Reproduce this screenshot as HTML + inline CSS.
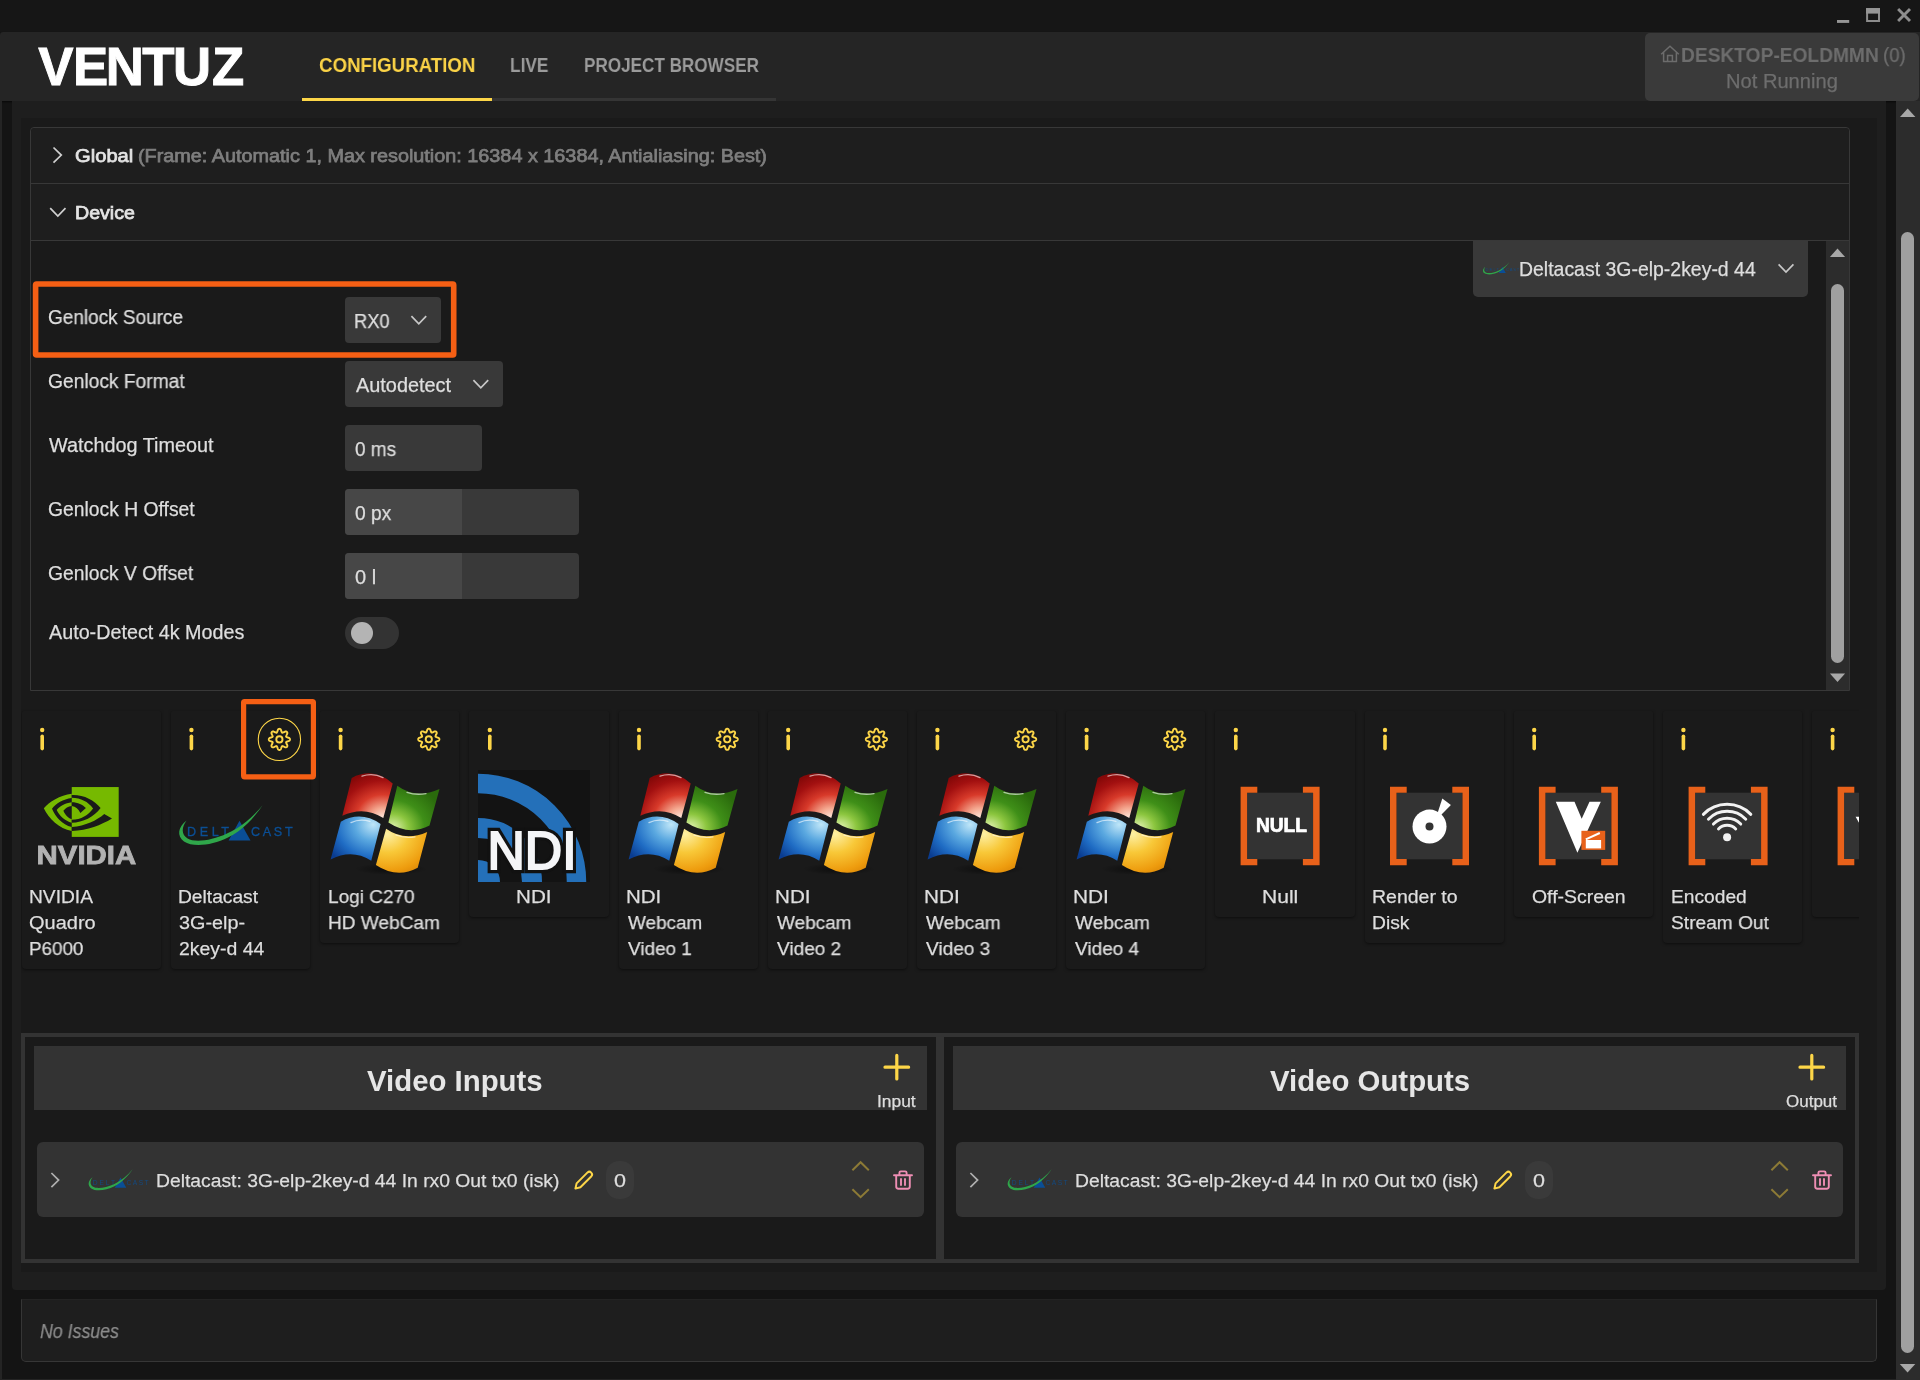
<!DOCTYPE html>
<html lang="en"><head><meta charset="utf-8"><title>Ventuz Configuration</title>
<style>
html,body{margin:0;padding:0;background:#141414;}
body{width:1920px;height:1380px;position:relative;overflow:hidden;font-family:"Liberation Sans",sans-serif;}
.b{position:absolute;box-sizing:border-box;}
.t{position:absolute;white-space:nowrap;line-height:1;transform-origin:0 0;display:block;will-change:transform;}
svg{position:absolute;overflow:visible;}
svg.g{will-change:transform;}
.card{position:absolute;background:#1a1a1a;box-shadow:0 1px 3px rgba(0,0,0,.5);border-radius:2px 2px 4px 4px;}
</style></head><body>

<div class="b" style="left:0px;top:0px;width:1920px;height:32px;background:#161616;"></div>
<div class="b" style="left:0px;top:32px;width:1920px;height:69px;background:#252525;border-radius:3px 0 0 0;box-shadow:0 1px 2px rgba(0,0,0,.6);"></div>
<div class="b" style="left:0px;top:101px;width:2px;height:1279px;background:#242424;"></div>
<div class="b" style="left:0px;top:1379px;width:1920px;height:1px;background:#242424;"></div>
<div class="b" style="left:12px;top:101px;width:1874px;height:1189px;background:#1e1e1e;border-radius:0 0 4px 4px;"></div>
<div class="b" style="left:21px;top:118px;width:1856px;height:1154px;background:#1a1a1a;"></div>
<div class="b" style="left:1896px;top:101px;width:24px;height:1279px;background:#2c2c2c;"></div>
<div class="b" style="left:1901px;top:232px;width:13px;height:1121px;background:#a0a0a0;border-radius:7px;"></div>
<svg style="left:1896px;top:101px" width="24" height="1279"><path d="M4 16 L19.4 16 L11.7 7.6 Z" fill="#a8a8a8"/><path d="M3.8 1263 L19.3 1263 L11.55 1271.4 Z" fill="#a8a8a8"/></svg>
<svg style="left:1830px;top:0" width="90" height="32"><rect x="7" y="20" width="12.2" height="2.9" fill="#969696"/><rect x="37.1" y="9.1" width="11.9" height="11.9" fill="none" stroke="#8c8c8c" stroke-width="2"/><rect x="36.1" y="8.1" width="13.9" height="5.5" fill="#959595"/><path d="M68.1 9.1 L80 21.1 M80 9.1 L68.1 21.1" stroke="#8e8e8e" stroke-width="2.9" fill="none"/></svg>
<svg class="g" style="left:0;top:32px" width="300" height="69"><text transform="scale(1.0 1)" x="38.32 73.07 105.87 142.31 172.98 212.01" y="53.2" font-family="Liberation Sans, sans-serif" font-weight="700" font-size="52.8" fill="#fff" stroke="#fff" stroke-width="0.9" stroke-linejoin="miter">VENTUZ</text></svg>
<div class="b" style="left:302px;top:98px;width:474px;height:3px;background:#353535;"></div>
<div class="b" style="left:302px;top:98px;width:190px;height:3px;background:#fdd648;"></div>
<span class="t" style="left:319px;top:55px;font-size:20.3px;color:#fbd347;transform:scaleX(0.9214);font-weight:700;">CONFIGURATION</span>
<span class="t" style="left:510px;top:55px;font-size:20.3px;color:#9b9b9b;transform:scaleX(0.8521);font-weight:700;">LIVE</span>
<span class="t" style="left:584px;top:55px;font-size:20.3px;color:#9b9b9b;transform:scaleX(0.8434);font-weight:700;">PROJECT BROWSER</span>
<div class="b" style="left:1645px;top:33px;width:274px;height:68px;background:#3a3a3a;border-radius:5px;"></div>
<svg style="left:1660px;top:45px" width="20" height="18"><path d="M1.2 9.2 L10 1.2 L18.8 9.2 M3.6 7.5 V16.6 H16.4 V7.5 M7.6 16.6 V10.6 H12.4 V16.6" fill="none" stroke="#6c6c6c" stroke-width="1.5"/></svg>
<span class="t" style="left:1681px;top:46px;font-size:19.4px;color:#6d6d6d;transform:scaleX(0.9890);font-weight:700;">DESKTOP-EOLDMMN</span>
<span class="t" style="left:1883px;top:46px;font-size:19.4px;color:#6d6d6d;transform:scaleX(0.9588);-webkit-text-stroke:0.25px #6d6d6d;">(0)</span>
<span class="t" style="left:1726px;top:72px;font-size:19.8px;color:#6d6d6d;transform:scaleX(1.0168);-webkit-text-stroke:0.25px #6d6d6d;">Not Running</span>
<div class="b" style="left:30px;top:127px;width:1820px;height:564px;background:#1a1a1a;border:1px solid #383838;border-radius:4px 4px 0 0;"></div>
<div class="b" style="left:31px;top:128px;width:1818px;height:55px;background:#1e1e1e;border-radius:4px 4px 0 0;"></div>
<div class="b" style="left:31px;top:183px;width:1818px;height:1px;background:#383838;"></div>
<div class="b" style="left:31px;top:184px;width:1818px;height:56px;background:#1e1e1e;"></div>
<div class="b" style="left:31px;top:240px;width:1818px;height:1px;background:#383838;"></div>
<svg style="left:48px;top:140px" width="24" height="90"><path d="M5.5 7.5 L13.3 15.1 L5.5 22.7" fill="none" stroke="#d0d0d0" stroke-width="1.7"/><path d="M2.2 68.1 L9.85 76 L17.5 68.1" fill="none" stroke="#d0d0d0" stroke-width="1.7"/></svg>
<span class="t" style="left:75px;top:146px;font-size:19.2px;color:#e4e4e4;transform:scaleX(1.0510);-webkit-text-stroke:0.75px #e4e4e4;">Global</span>
<span class="t" style="left:138px;top:146px;font-size:19.2px;color:#7e7e7e;transform:scaleX(1.0328);-webkit-text-stroke:0.75px #7e7e7e;">(Frame: Automatic 1, Max resolution: 16384 x 16384, Antialiasing: Best)</span>
<span class="t" style="left:75px;top:203px;font-size:19.2px;color:#e4e4e4;transform:scaleX(1.0216);-webkit-text-stroke:0.75px #e4e4e4;">Device</span>
<div class="b" style="left:1826px;top:241px;width:23px;height:449px;background:#2c2c2c;"></div>
<div class="b" style="left:1831px;top:284px;width:13px;height:379px;background:#a0a0a0;border-radius:7px;"></div>
<svg style="left:1826px;top:241px" width="23" height="449"><path d="M3.9 16 L19.1 16 L11.5 7.6 Z" fill="#a8a8a8"/><path d="M3.9 432.6 L19.1 432.6 L11.5 441 Z" fill="#a8a8a8"/></svg>
<div class="b" style="left:1473px;top:241px;width:335px;height:56px;background:#393939;border-radius:0 0 5px 5px;"></div>
<svg class="g" style="left:1481.6px;top:261.2px" width="38.4" height="14.7"><g transform="scale(0.32)"><path d="M52.6 37.6 L63.5 17.8 L74.5 37.6 Z" fill="#0a4e96"/><text x="11" y="32.6" font-family="Liberation Sans, sans-serif" font-size="12.6" fill="#0b4f95" stroke="#0b4f95" stroke-width="0" opacity="0.8" textLength="42" lengthAdjust="spacing">DELT</text><text x="75" y="32.6" font-family="Liberation Sans, sans-serif" font-size="12.6" fill="#0b4f95" stroke="#0b4f95" stroke-width="0" opacity="0.8" textLength="41.6" lengthAdjust="spacing">CAST</text><path d="M10.6 17.6 C2 24 0.5 33 8 38.6 C17 44.6 36 42.6 52 34.6 C66 27.6 78 15 86.4 2.4 C77 14 65 24 51 30.6 C36 37.6 19 40 11.6 35.6 C5 31.6 5.6 24 10.6 17.6 Z" fill="#2fa64a"/></g></svg>
<span class="t" style="left:1519px;top:260px;font-size:19.3px;color:#dedede;transform:scaleX(1.0086);-webkit-text-stroke:0.25px #dedede;">Deltacast 3G-elp-2key-d 44</span>
<svg style="left:1776px;top:260px" width="20" height="16"><path d="M2.6 4.4 L10 12 L17.4 4.4" fill="none" stroke="#c8c8c8" stroke-width="1.7"/></svg>
<span class="t" style="left:48px;top:308px;font-size:19.3px;color:#dedede;transform:scaleX(0.9840);-webkit-text-stroke:0.25px #dedede;">Genlock Source</span>
<span class="t" style="left:48px;top:372px;font-size:19.3px;color:#dedede;transform:scaleX(0.9969);-webkit-text-stroke:0.25px #dedede;">Genlock Format</span>
<span class="t" style="left:49px;top:436px;font-size:19.3px;color:#dedede;transform:scaleX(1.0285);-webkit-text-stroke:0.25px #dedede;">Watchdog Timeout</span>
<span class="t" style="left:48px;top:500px;font-size:19.3px;color:#dedede;transform:scaleX(1.0013);-webkit-text-stroke:0.25px #dedede;">Genlock H Offset</span>
<span class="t" style="left:48px;top:564px;font-size:19.3px;color:#dedede;transform:scaleX(0.9988);-webkit-text-stroke:0.25px #dedede;">Genlock V Offset</span>
<span class="t" style="left:49px;top:623px;font-size:19.3px;color:#dedede;transform:scaleX(1.0238);-webkit-text-stroke:0.25px #dedede;">Auto-Detect 4k Modes</span>
<div class="b" style="left:345px;top:297px;width:96px;height:46px;background:#393939;border-radius:4px;"></div>
<span class="t" style="left:354px;top:312px;font-size:19.3px;color:#dedede;transform:scaleX(0.9499);-webkit-text-stroke:0.25px #dedede;">RX0</span>
<svg style="left:409px;top:312px" width="20" height="16"><path d="M2.4 4.2 L9.8 11.8 L17.2 4.2" fill="none" stroke="#c8c8c8" stroke-width="1.7"/></svg>
<div class="b" style="left:345px;top:361px;width:158px;height:46px;background:#393939;border-radius:4px;"></div>
<span class="t" style="left:356px;top:376px;font-size:19.3px;color:#dedede;transform:scaleX(1.0313);-webkit-text-stroke:0.25px #dedede;">Autodetect</span>
<svg style="left:471px;top:376px" width="20" height="16"><path d="M2.4 4.2 L9.8 11.8 L17.2 4.2" fill="none" stroke="#c8c8c8" stroke-width="1.7"/></svg>
<div class="b" style="left:345px;top:425px;width:137px;height:46px;background:#393939;border-radius:4px;"></div>
<span class="t" style="left:355px;top:440px;font-size:19.3px;color:#dedede;transform:scaleX(0.9823);-webkit-text-stroke:0.25px #dedede;">0 ms</span>
<div class="b" style="left:345px;top:489px;width:234px;height:46px;background:#393939;border-radius:4px;"></div>
<div class="b" style="left:345px;top:489px;width:117px;height:46px;background:#474747;border-radius:4px 0 0 4px;"></div>
<span class="t" style="left:355px;top:504px;font-size:19.3px;color:#dedede;transform:scaleX(0.9960);-webkit-text-stroke:0.25px #dedede;">0 px</span>
<div class="b" style="left:345px;top:553px;width:234px;height:46px;background:#393939;border-radius:4px;"></div>
<div class="b" style="left:345px;top:553px;width:117px;height:46px;background:#474747;border-radius:4px 0 0 4px;"></div>
<span class="t" style="left:355px;top:568px;font-size:19.3px;color:#dedede;transform:scaleX(1.0394);-webkit-text-stroke:0.25px #dedede;">0 l</span>
<div class="b" style="left:345px;top:617px;width:54px;height:32px;background:#333333;border-radius:16px;"></div>
<div class="b" style="left:351px;top:622px;width:22px;height:22px;background:#b4b4b4;border-radius:11px;"></div>
<svg style="left:0;top:0" width="1" height="1"><rect x="35.6" y="284" width="418.1" height="71" rx="1" fill="none" stroke="#f55f14" stroke-width="5.6" stroke-linejoin="round"/></svg>
<div class="b" style="left:21px;top:700px;width:1838px;height:320px;overflow:hidden;">
<div style="position:absolute;left:-21px;top:-700px;">
<div class="card" style="left:21.7px;top:710.5px;width:139.3px;height:258px;"></div>
<svg style="left:0;top:0" width="1" height="1"><circle cx="42.2" cy="730" r="2.2" fill="#fdd648"/><path d="M42.2 736.3 V748.6" stroke="#fdd648" stroke-width="3.6" stroke-linecap="round"/></svg>
<div class="card" style="left:170.9px;top:710.5px;width:139.3px;height:258px;"></div>
<svg style="left:0;top:0" width="1" height="1"><circle cx="191.4" cy="730" r="2.2" fill="#fdd648"/><path d="M191.4 736.3 V748.6" stroke="#fdd648" stroke-width="3.6" stroke-linecap="round"/></svg>
<div class="card" style="left:320.1px;top:710.5px;width:139.3px;height:232px;"></div>
<svg style="left:0;top:0" width="1" height="1"><circle cx="340.6" cy="730" r="2.2" fill="#fdd648"/><path d="M340.6 736.3 V748.6" stroke="#fdd648" stroke-width="3.6" stroke-linecap="round"/></svg>
<div class="card" style="left:469.3px;top:710.5px;width:139.3px;height:206px;"></div>
<svg style="left:0;top:0" width="1" height="1"><circle cx="489.8" cy="730" r="2.2" fill="#fdd648"/><path d="M489.8 736.3 V748.6" stroke="#fdd648" stroke-width="3.6" stroke-linecap="round"/></svg>
<div class="card" style="left:618.5px;top:710.5px;width:139.3px;height:258px;"></div>
<svg style="left:0;top:0" width="1" height="1"><circle cx="639.0" cy="730" r="2.2" fill="#fdd648"/><path d="M639.0 736.3 V748.6" stroke="#fdd648" stroke-width="3.6" stroke-linecap="round"/></svg>
<div class="card" style="left:767.7px;top:710.5px;width:139.3px;height:258px;"></div>
<svg style="left:0;top:0" width="1" height="1"><circle cx="788.2" cy="730" r="2.2" fill="#fdd648"/><path d="M788.2 736.3 V748.6" stroke="#fdd648" stroke-width="3.6" stroke-linecap="round"/></svg>
<div class="card" style="left:916.9px;top:710.5px;width:139.3px;height:258px;"></div>
<svg style="left:0;top:0" width="1" height="1"><circle cx="937.4" cy="730" r="2.2" fill="#fdd648"/><path d="M937.4 736.3 V748.6" stroke="#fdd648" stroke-width="3.6" stroke-linecap="round"/></svg>
<div class="card" style="left:1066.1px;top:710.5px;width:139.3px;height:258px;"></div>
<svg style="left:0;top:0" width="1" height="1"><circle cx="1086.6" cy="730" r="2.2" fill="#fdd648"/><path d="M1086.6 736.3 V748.6" stroke="#fdd648" stroke-width="3.6" stroke-linecap="round"/></svg>
<div class="card" style="left:1215.3px;top:710.5px;width:139.3px;height:206px;"></div>
<svg style="left:0;top:0" width="1" height="1"><circle cx="1235.8" cy="730" r="2.2" fill="#fdd648"/><path d="M1235.8 736.3 V748.6" stroke="#fdd648" stroke-width="3.6" stroke-linecap="round"/></svg>
<div class="card" style="left:1364.5px;top:710.5px;width:139.3px;height:232px;"></div>
<svg style="left:0;top:0" width="1" height="1"><circle cx="1385.0" cy="730" r="2.2" fill="#fdd648"/><path d="M1385.0 736.3 V748.6" stroke="#fdd648" stroke-width="3.6" stroke-linecap="round"/></svg>
<div class="card" style="left:1513.7px;top:710.5px;width:139.3px;height:206px;"></div>
<svg style="left:0;top:0" width="1" height="1"><circle cx="1534.2" cy="730" r="2.2" fill="#fdd648"/><path d="M1534.2 736.3 V748.6" stroke="#fdd648" stroke-width="3.6" stroke-linecap="round"/></svg>
<div class="card" style="left:1662.9px;top:710.5px;width:139.3px;height:232px;"></div>
<svg style="left:0;top:0" width="1" height="1"><circle cx="1683.4" cy="730" r="2.2" fill="#fdd648"/><path d="M1683.4 736.3 V748.6" stroke="#fdd648" stroke-width="3.6" stroke-linecap="round"/></svg>
<div class="card" style="left:1812.1px;top:710.5px;width:139.3px;height:206px;"></div>
<svg style="left:0;top:0" width="1" height="1"><circle cx="1832.6" cy="730" r="2.2" fill="#fdd648"/><path d="M1832.6 736.3 V748.6" stroke="#fdd648" stroke-width="3.6" stroke-linecap="round"/></svg>
<svg style="left:0;top:0" width="1" height="1"><path d="M428.80 728.70 L429.08 728.73 L429.35 728.80 L429.62 728.94 L429.87 729.12 L430.11 729.37 L430.32 729.70 L430.49 730.17 L430.60 730.82 L430.77 731.11 L430.91 731.44 L431.03 731.76 L431.15 732.06 L431.28 732.31 L431.41 732.49 L431.57 732.60 L431.77 732.64 L431.99 732.61 L432.26 732.52 L432.55 732.39 L432.87 732.25 L433.20 732.12 L433.52 732.03 L434.06 731.65 L434.51 731.44 L434.90 731.36 L435.24 731.35 L435.55 731.39 L435.83 731.49 L436.08 731.63 L436.30 731.80 L436.47 732.02 L436.61 732.27 L436.71 732.55 L436.75 732.86 L436.74 733.20 L436.66 733.59 L436.45 734.04 L436.07 734.58 L435.98 734.90 L435.85 735.23 L435.71 735.55 L435.58 735.84 L435.49 736.11 L435.46 736.33 L435.50 736.53 L435.61 736.69 L435.79 736.82 L436.04 736.95 L436.34 737.07 L436.66 737.19 L436.99 737.33 L437.28 737.50 L437.93 737.61 L438.40 737.78 L438.73 737.99 L438.98 738.23 L439.16 738.48 L439.30 738.75 L439.37 739.02 L439.40 739.30 L439.37 739.58 L439.30 739.85 L439.16 740.12 L438.98 740.37 L438.73 740.61 L438.40 740.82 L437.93 740.99 L437.28 741.10 L436.99 741.27 L436.66 741.41 L436.34 741.53 L436.04 741.65 L435.79 741.78 L435.61 741.91 L435.50 742.07 L435.46 742.27 L435.49 742.49 L435.58 742.76 L435.71 743.05 L435.85 743.37 L435.98 743.70 L436.07 744.02 L436.45 744.56 L436.66 745.01 L436.74 745.40 L436.75 745.74 L436.71 746.05 L436.61 746.33 L436.47 746.58 L436.30 746.80 L436.08 746.97 L435.83 747.11 L435.55 747.21 L435.24 747.25 L434.90 747.24 L434.51 747.16 L434.06 746.95 L433.52 746.57 L433.20 746.48 L432.87 746.35 L432.55 746.21 L432.26 746.08 L431.99 745.99 L431.77 745.96 L431.57 746.00 L431.41 746.11 L431.28 746.29 L431.15 746.54 L431.03 746.84 L430.91 747.16 L430.77 747.49 L430.60 747.78 L430.49 748.43 L430.32 748.90 L430.11 749.23 L429.87 749.48 L429.62 749.66 L429.35 749.80 L429.08 749.87 L428.80 749.90 L428.52 749.87 L428.25 749.80 L427.98 749.66 L427.73 749.48 L427.49 749.23 L427.28 748.90 L427.11 748.43 L427.00 747.78 L426.83 747.49 L426.69 747.16 L426.57 746.84 L426.45 746.54 L426.32 746.29 L426.19 746.11 L426.03 746.00 L425.83 745.96 L425.61 745.99 L425.34 746.08 L425.05 746.21 L424.73 746.35 L424.40 746.48 L424.08 746.57 L423.54 746.95 L423.09 747.16 L422.70 747.24 L422.36 747.25 L422.05 747.21 L421.77 747.11 L421.52 746.97 L421.30 746.80 L421.13 746.58 L420.99 746.33 L420.89 746.05 L420.85 745.74 L420.86 745.40 L420.94 745.01 L421.15 744.56 L421.53 744.02 L421.62 743.70 L421.75 743.37 L421.89 743.05 L422.02 742.76 L422.11 742.49 L422.14 742.27 L422.10 742.07 L421.99 741.91 L421.81 741.78 L421.56 741.65 L421.26 741.53 L420.94 741.41 L420.61 741.27 L420.32 741.10 L419.67 740.99 L419.20 740.82 L418.87 740.61 L418.62 740.37 L418.44 740.12 L418.30 739.85 L418.23 739.58 L418.20 739.30 L418.23 739.02 L418.30 738.75 L418.44 738.48 L418.62 738.23 L418.87 737.99 L419.20 737.78 L419.67 737.61 L420.32 737.50 L420.61 737.33 L420.94 737.19 L421.26 737.07 L421.56 736.95 L421.81 736.82 L421.99 736.69 L422.10 736.53 L422.14 736.33 L422.11 736.11 L422.02 735.84 L421.89 735.55 L421.75 735.23 L421.62 734.90 L421.53 734.58 L421.15 734.04 L420.94 733.59 L420.86 733.20 L420.85 732.86 L420.89 732.55 L420.99 732.27 L421.13 732.02 L421.30 731.80 L421.52 731.63 L421.77 731.49 L422.05 731.39 L422.36 731.35 L422.70 731.36 L423.09 731.44 L423.54 731.65 L424.08 732.03 L424.40 732.12 L424.73 732.25 L425.05 732.39 L425.34 732.52 L425.61 732.61 L425.83 732.64 L426.03 732.60 L426.19 732.49 L426.32 732.31 L426.45 732.06 L426.57 731.76 L426.69 731.44 L426.83 731.11 L427.00 730.82 L427.11 730.17 L427.28 729.70 L427.49 729.37 L427.73 729.12 L427.98 728.94 L428.25 728.80 L428.52 728.73 Z" fill="none" stroke="#fdd648" stroke-width="1.9" stroke-linejoin="round"/><circle cx="428.8" cy="739.3" r="3.1" fill="none" stroke="#fdd648" stroke-width="1.9"/></svg>
<svg style="left:0;top:0" width="1" height="1"><path d="M727.20 728.70 L727.48 728.73 L727.75 728.80 L728.02 728.94 L728.27 729.12 L728.51 729.37 L728.72 729.70 L728.89 730.17 L729.00 730.82 L729.17 731.11 L729.31 731.44 L729.43 731.76 L729.55 732.06 L729.68 732.31 L729.81 732.49 L729.97 732.60 L730.17 732.64 L730.39 732.61 L730.66 732.52 L730.95 732.39 L731.27 732.25 L731.60 732.12 L731.92 732.03 L732.46 731.65 L732.91 731.44 L733.30 731.36 L733.64 731.35 L733.95 731.39 L734.23 731.49 L734.48 731.63 L734.70 731.80 L734.87 732.02 L735.01 732.27 L735.11 732.55 L735.15 732.86 L735.14 733.20 L735.06 733.59 L734.85 734.04 L734.47 734.58 L734.38 734.90 L734.25 735.23 L734.11 735.55 L733.98 735.84 L733.89 736.11 L733.86 736.33 L733.90 736.53 L734.01 736.69 L734.19 736.82 L734.44 736.95 L734.74 737.07 L735.06 737.19 L735.39 737.33 L735.68 737.50 L736.33 737.61 L736.80 737.78 L737.13 737.99 L737.38 738.23 L737.56 738.48 L737.70 738.75 L737.77 739.02 L737.80 739.30 L737.77 739.58 L737.70 739.85 L737.56 740.12 L737.38 740.37 L737.13 740.61 L736.80 740.82 L736.33 740.99 L735.68 741.10 L735.39 741.27 L735.06 741.41 L734.74 741.53 L734.44 741.65 L734.19 741.78 L734.01 741.91 L733.90 742.07 L733.86 742.27 L733.89 742.49 L733.98 742.76 L734.11 743.05 L734.25 743.37 L734.38 743.70 L734.47 744.02 L734.85 744.56 L735.06 745.01 L735.14 745.40 L735.15 745.74 L735.11 746.05 L735.01 746.33 L734.87 746.58 L734.70 746.80 L734.48 746.97 L734.23 747.11 L733.95 747.21 L733.64 747.25 L733.30 747.24 L732.91 747.16 L732.46 746.95 L731.92 746.57 L731.60 746.48 L731.27 746.35 L730.95 746.21 L730.66 746.08 L730.39 745.99 L730.17 745.96 L729.97 746.00 L729.81 746.11 L729.68 746.29 L729.55 746.54 L729.43 746.84 L729.31 747.16 L729.17 747.49 L729.00 747.78 L728.89 748.43 L728.72 748.90 L728.51 749.23 L728.27 749.48 L728.02 749.66 L727.75 749.80 L727.48 749.87 L727.20 749.90 L726.92 749.87 L726.65 749.80 L726.38 749.66 L726.13 749.48 L725.89 749.23 L725.68 748.90 L725.51 748.43 L725.40 747.78 L725.23 747.49 L725.09 747.16 L724.97 746.84 L724.85 746.54 L724.72 746.29 L724.59 746.11 L724.43 746.00 L724.23 745.96 L724.01 745.99 L723.74 746.08 L723.45 746.21 L723.13 746.35 L722.80 746.48 L722.48 746.57 L721.94 746.95 L721.49 747.16 L721.10 747.24 L720.76 747.25 L720.45 747.21 L720.17 747.11 L719.92 746.97 L719.70 746.80 L719.53 746.58 L719.39 746.33 L719.29 746.05 L719.25 745.74 L719.26 745.40 L719.34 745.01 L719.55 744.56 L719.93 744.02 L720.02 743.70 L720.15 743.37 L720.29 743.05 L720.42 742.76 L720.51 742.49 L720.54 742.27 L720.50 742.07 L720.39 741.91 L720.21 741.78 L719.96 741.65 L719.66 741.53 L719.34 741.41 L719.01 741.27 L718.72 741.10 L718.07 740.99 L717.60 740.82 L717.27 740.61 L717.02 740.37 L716.84 740.12 L716.70 739.85 L716.63 739.58 L716.60 739.30 L716.63 739.02 L716.70 738.75 L716.84 738.48 L717.02 738.23 L717.27 737.99 L717.60 737.78 L718.07 737.61 L718.72 737.50 L719.01 737.33 L719.34 737.19 L719.66 737.07 L719.96 736.95 L720.21 736.82 L720.39 736.69 L720.50 736.53 L720.54 736.33 L720.51 736.11 L720.42 735.84 L720.29 735.55 L720.15 735.23 L720.02 734.90 L719.93 734.58 L719.55 734.04 L719.34 733.59 L719.26 733.20 L719.25 732.86 L719.29 732.55 L719.39 732.27 L719.53 732.02 L719.70 731.80 L719.92 731.63 L720.17 731.49 L720.45 731.39 L720.76 731.35 L721.10 731.36 L721.49 731.44 L721.94 731.65 L722.48 732.03 L722.80 732.12 L723.13 732.25 L723.45 732.39 L723.74 732.52 L724.01 732.61 L724.23 732.64 L724.43 732.60 L724.59 732.49 L724.72 732.31 L724.85 732.06 L724.97 731.76 L725.09 731.44 L725.23 731.11 L725.40 730.82 L725.51 730.17 L725.68 729.70 L725.89 729.37 L726.13 729.12 L726.38 728.94 L726.65 728.80 L726.92 728.73 Z" fill="none" stroke="#fdd648" stroke-width="1.9" stroke-linejoin="round"/><circle cx="727.2" cy="739.3" r="3.1" fill="none" stroke="#fdd648" stroke-width="1.9"/></svg>
<svg style="left:0;top:0" width="1" height="1"><path d="M876.40 728.70 L876.68 728.73 L876.95 728.80 L877.22 728.94 L877.47 729.12 L877.71 729.37 L877.92 729.70 L878.09 730.17 L878.20 730.82 L878.37 731.11 L878.51 731.44 L878.63 731.76 L878.75 732.06 L878.88 732.31 L879.01 732.49 L879.17 732.60 L879.37 732.64 L879.59 732.61 L879.86 732.52 L880.15 732.39 L880.47 732.25 L880.80 732.12 L881.12 732.03 L881.66 731.65 L882.11 731.44 L882.50 731.36 L882.84 731.35 L883.15 731.39 L883.43 731.49 L883.68 731.63 L883.90 731.80 L884.07 732.02 L884.21 732.27 L884.31 732.55 L884.35 732.86 L884.34 733.20 L884.26 733.59 L884.05 734.04 L883.67 734.58 L883.58 734.90 L883.45 735.23 L883.31 735.55 L883.18 735.84 L883.09 736.11 L883.06 736.33 L883.10 736.53 L883.21 736.69 L883.39 736.82 L883.64 736.95 L883.94 737.07 L884.26 737.19 L884.59 737.33 L884.88 737.50 L885.53 737.61 L886.00 737.78 L886.33 737.99 L886.58 738.23 L886.76 738.48 L886.90 738.75 L886.97 739.02 L887.00 739.30 L886.97 739.58 L886.90 739.85 L886.76 740.12 L886.58 740.37 L886.33 740.61 L886.00 740.82 L885.53 740.99 L884.88 741.10 L884.59 741.27 L884.26 741.41 L883.94 741.53 L883.64 741.65 L883.39 741.78 L883.21 741.91 L883.10 742.07 L883.06 742.27 L883.09 742.49 L883.18 742.76 L883.31 743.05 L883.45 743.37 L883.58 743.70 L883.67 744.02 L884.05 744.56 L884.26 745.01 L884.34 745.40 L884.35 745.74 L884.31 746.05 L884.21 746.33 L884.07 746.58 L883.90 746.80 L883.68 746.97 L883.43 747.11 L883.15 747.21 L882.84 747.25 L882.50 747.24 L882.11 747.16 L881.66 746.95 L881.12 746.57 L880.80 746.48 L880.47 746.35 L880.15 746.21 L879.86 746.08 L879.59 745.99 L879.37 745.96 L879.17 746.00 L879.01 746.11 L878.88 746.29 L878.75 746.54 L878.63 746.84 L878.51 747.16 L878.37 747.49 L878.20 747.78 L878.09 748.43 L877.92 748.90 L877.71 749.23 L877.47 749.48 L877.22 749.66 L876.95 749.80 L876.68 749.87 L876.40 749.90 L876.12 749.87 L875.85 749.80 L875.58 749.66 L875.33 749.48 L875.09 749.23 L874.88 748.90 L874.71 748.43 L874.60 747.78 L874.43 747.49 L874.29 747.16 L874.17 746.84 L874.05 746.54 L873.92 746.29 L873.79 746.11 L873.63 746.00 L873.43 745.96 L873.21 745.99 L872.94 746.08 L872.65 746.21 L872.33 746.35 L872.00 746.48 L871.68 746.57 L871.14 746.95 L870.69 747.16 L870.30 747.24 L869.96 747.25 L869.65 747.21 L869.37 747.11 L869.12 746.97 L868.90 746.80 L868.73 746.58 L868.59 746.33 L868.49 746.05 L868.45 745.74 L868.46 745.40 L868.54 745.01 L868.75 744.56 L869.13 744.02 L869.22 743.70 L869.35 743.37 L869.49 743.05 L869.62 742.76 L869.71 742.49 L869.74 742.27 L869.70 742.07 L869.59 741.91 L869.41 741.78 L869.16 741.65 L868.86 741.53 L868.54 741.41 L868.21 741.27 L867.92 741.10 L867.27 740.99 L866.80 740.82 L866.47 740.61 L866.22 740.37 L866.04 740.12 L865.90 739.85 L865.83 739.58 L865.80 739.30 L865.83 739.02 L865.90 738.75 L866.04 738.48 L866.22 738.23 L866.47 737.99 L866.80 737.78 L867.27 737.61 L867.92 737.50 L868.21 737.33 L868.54 737.19 L868.86 737.07 L869.16 736.95 L869.41 736.82 L869.59 736.69 L869.70 736.53 L869.74 736.33 L869.71 736.11 L869.62 735.84 L869.49 735.55 L869.35 735.23 L869.22 734.90 L869.13 734.58 L868.75 734.04 L868.54 733.59 L868.46 733.20 L868.45 732.86 L868.49 732.55 L868.59 732.27 L868.73 732.02 L868.90 731.80 L869.12 731.63 L869.37 731.49 L869.65 731.39 L869.96 731.35 L870.30 731.36 L870.69 731.44 L871.14 731.65 L871.68 732.03 L872.00 732.12 L872.33 732.25 L872.65 732.39 L872.94 732.52 L873.21 732.61 L873.43 732.64 L873.63 732.60 L873.79 732.49 L873.92 732.31 L874.05 732.06 L874.17 731.76 L874.29 731.44 L874.43 731.11 L874.60 730.82 L874.71 730.17 L874.88 729.70 L875.09 729.37 L875.33 729.12 L875.58 728.94 L875.85 728.80 L876.12 728.73 Z" fill="none" stroke="#fdd648" stroke-width="1.9" stroke-linejoin="round"/><circle cx="876.4" cy="739.3" r="3.1" fill="none" stroke="#fdd648" stroke-width="1.9"/></svg>
<svg style="left:0;top:0" width="1" height="1"><path d="M1025.60 728.70 L1025.88 728.73 L1026.15 728.80 L1026.42 728.94 L1026.67 729.12 L1026.91 729.37 L1027.12 729.70 L1027.29 730.17 L1027.40 730.82 L1027.57 731.11 L1027.71 731.44 L1027.83 731.76 L1027.95 732.06 L1028.08 732.31 L1028.21 732.49 L1028.37 732.60 L1028.57 732.64 L1028.79 732.61 L1029.06 732.52 L1029.35 732.39 L1029.67 732.25 L1030.00 732.12 L1030.32 732.03 L1030.86 731.65 L1031.31 731.44 L1031.70 731.36 L1032.04 731.35 L1032.35 731.39 L1032.63 731.49 L1032.88 731.63 L1033.10 731.80 L1033.27 732.02 L1033.41 732.27 L1033.51 732.55 L1033.55 732.86 L1033.54 733.20 L1033.46 733.59 L1033.25 734.04 L1032.87 734.58 L1032.78 734.90 L1032.65 735.23 L1032.51 735.55 L1032.38 735.84 L1032.29 736.11 L1032.26 736.33 L1032.30 736.53 L1032.41 736.69 L1032.59 736.82 L1032.84 736.95 L1033.14 737.07 L1033.46 737.19 L1033.79 737.33 L1034.08 737.50 L1034.73 737.61 L1035.20 737.78 L1035.53 737.99 L1035.78 738.23 L1035.96 738.48 L1036.10 738.75 L1036.17 739.02 L1036.20 739.30 L1036.17 739.58 L1036.10 739.85 L1035.96 740.12 L1035.78 740.37 L1035.53 740.61 L1035.20 740.82 L1034.73 740.99 L1034.08 741.10 L1033.79 741.27 L1033.46 741.41 L1033.14 741.53 L1032.84 741.65 L1032.59 741.78 L1032.41 741.91 L1032.30 742.07 L1032.26 742.27 L1032.29 742.49 L1032.38 742.76 L1032.51 743.05 L1032.65 743.37 L1032.78 743.70 L1032.87 744.02 L1033.25 744.56 L1033.46 745.01 L1033.54 745.40 L1033.55 745.74 L1033.51 746.05 L1033.41 746.33 L1033.27 746.58 L1033.10 746.80 L1032.88 746.97 L1032.63 747.11 L1032.35 747.21 L1032.04 747.25 L1031.70 747.24 L1031.31 747.16 L1030.86 746.95 L1030.32 746.57 L1030.00 746.48 L1029.67 746.35 L1029.35 746.21 L1029.06 746.08 L1028.79 745.99 L1028.57 745.96 L1028.37 746.00 L1028.21 746.11 L1028.08 746.29 L1027.95 746.54 L1027.83 746.84 L1027.71 747.16 L1027.57 747.49 L1027.40 747.78 L1027.29 748.43 L1027.12 748.90 L1026.91 749.23 L1026.67 749.48 L1026.42 749.66 L1026.15 749.80 L1025.88 749.87 L1025.60 749.90 L1025.32 749.87 L1025.05 749.80 L1024.78 749.66 L1024.53 749.48 L1024.29 749.23 L1024.08 748.90 L1023.91 748.43 L1023.80 747.78 L1023.63 747.49 L1023.49 747.16 L1023.37 746.84 L1023.25 746.54 L1023.12 746.29 L1022.99 746.11 L1022.83 746.00 L1022.63 745.96 L1022.41 745.99 L1022.14 746.08 L1021.85 746.21 L1021.53 746.35 L1021.20 746.48 L1020.88 746.57 L1020.34 746.95 L1019.89 747.16 L1019.50 747.24 L1019.16 747.25 L1018.85 747.21 L1018.57 747.11 L1018.32 746.97 L1018.10 746.80 L1017.93 746.58 L1017.79 746.33 L1017.69 746.05 L1017.65 745.74 L1017.66 745.40 L1017.74 745.01 L1017.95 744.56 L1018.33 744.02 L1018.42 743.70 L1018.55 743.37 L1018.69 743.05 L1018.82 742.76 L1018.91 742.49 L1018.94 742.27 L1018.90 742.07 L1018.79 741.91 L1018.61 741.78 L1018.36 741.65 L1018.06 741.53 L1017.74 741.41 L1017.41 741.27 L1017.12 741.10 L1016.47 740.99 L1016.00 740.82 L1015.67 740.61 L1015.42 740.37 L1015.24 740.12 L1015.10 739.85 L1015.03 739.58 L1015.00 739.30 L1015.03 739.02 L1015.10 738.75 L1015.24 738.48 L1015.42 738.23 L1015.67 737.99 L1016.00 737.78 L1016.47 737.61 L1017.12 737.50 L1017.41 737.33 L1017.74 737.19 L1018.06 737.07 L1018.36 736.95 L1018.61 736.82 L1018.79 736.69 L1018.90 736.53 L1018.94 736.33 L1018.91 736.11 L1018.82 735.84 L1018.69 735.55 L1018.55 735.23 L1018.42 734.90 L1018.33 734.58 L1017.95 734.04 L1017.74 733.59 L1017.66 733.20 L1017.65 732.86 L1017.69 732.55 L1017.79 732.27 L1017.93 732.02 L1018.10 731.80 L1018.32 731.63 L1018.57 731.49 L1018.85 731.39 L1019.16 731.35 L1019.50 731.36 L1019.89 731.44 L1020.34 731.65 L1020.88 732.03 L1021.20 732.12 L1021.53 732.25 L1021.85 732.39 L1022.14 732.52 L1022.41 732.61 L1022.63 732.64 L1022.83 732.60 L1022.99 732.49 L1023.12 732.31 L1023.25 732.06 L1023.37 731.76 L1023.49 731.44 L1023.63 731.11 L1023.80 730.82 L1023.91 730.17 L1024.08 729.70 L1024.29 729.37 L1024.53 729.12 L1024.78 728.94 L1025.05 728.80 L1025.32 728.73 Z" fill="none" stroke="#fdd648" stroke-width="1.9" stroke-linejoin="round"/><circle cx="1025.6" cy="739.3" r="3.1" fill="none" stroke="#fdd648" stroke-width="1.9"/></svg>
<svg style="left:0;top:0" width="1" height="1"><path d="M1174.80 728.70 L1175.08 728.73 L1175.35 728.80 L1175.62 728.94 L1175.87 729.12 L1176.11 729.37 L1176.32 729.70 L1176.49 730.17 L1176.60 730.82 L1176.77 731.11 L1176.91 731.44 L1177.03 731.76 L1177.15 732.06 L1177.28 732.31 L1177.41 732.49 L1177.57 732.60 L1177.77 732.64 L1177.99 732.61 L1178.26 732.52 L1178.55 732.39 L1178.87 732.25 L1179.20 732.12 L1179.52 732.03 L1180.06 731.65 L1180.51 731.44 L1180.90 731.36 L1181.24 731.35 L1181.55 731.39 L1181.83 731.49 L1182.08 731.63 L1182.30 731.80 L1182.47 732.02 L1182.61 732.27 L1182.71 732.55 L1182.75 732.86 L1182.74 733.20 L1182.66 733.59 L1182.45 734.04 L1182.07 734.58 L1181.98 734.90 L1181.85 735.23 L1181.71 735.55 L1181.58 735.84 L1181.49 736.11 L1181.46 736.33 L1181.50 736.53 L1181.61 736.69 L1181.79 736.82 L1182.04 736.95 L1182.34 737.07 L1182.66 737.19 L1182.99 737.33 L1183.28 737.50 L1183.93 737.61 L1184.40 737.78 L1184.73 737.99 L1184.98 738.23 L1185.16 738.48 L1185.30 738.75 L1185.37 739.02 L1185.40 739.30 L1185.37 739.58 L1185.30 739.85 L1185.16 740.12 L1184.98 740.37 L1184.73 740.61 L1184.40 740.82 L1183.93 740.99 L1183.28 741.10 L1182.99 741.27 L1182.66 741.41 L1182.34 741.53 L1182.04 741.65 L1181.79 741.78 L1181.61 741.91 L1181.50 742.07 L1181.46 742.27 L1181.49 742.49 L1181.58 742.76 L1181.71 743.05 L1181.85 743.37 L1181.98 743.70 L1182.07 744.02 L1182.45 744.56 L1182.66 745.01 L1182.74 745.40 L1182.75 745.74 L1182.71 746.05 L1182.61 746.33 L1182.47 746.58 L1182.30 746.80 L1182.08 746.97 L1181.83 747.11 L1181.55 747.21 L1181.24 747.25 L1180.90 747.24 L1180.51 747.16 L1180.06 746.95 L1179.52 746.57 L1179.20 746.48 L1178.87 746.35 L1178.55 746.21 L1178.26 746.08 L1177.99 745.99 L1177.77 745.96 L1177.57 746.00 L1177.41 746.11 L1177.28 746.29 L1177.15 746.54 L1177.03 746.84 L1176.91 747.16 L1176.77 747.49 L1176.60 747.78 L1176.49 748.43 L1176.32 748.90 L1176.11 749.23 L1175.87 749.48 L1175.62 749.66 L1175.35 749.80 L1175.08 749.87 L1174.80 749.90 L1174.52 749.87 L1174.25 749.80 L1173.98 749.66 L1173.73 749.48 L1173.49 749.23 L1173.28 748.90 L1173.11 748.43 L1173.00 747.78 L1172.83 747.49 L1172.69 747.16 L1172.57 746.84 L1172.45 746.54 L1172.32 746.29 L1172.19 746.11 L1172.03 746.00 L1171.83 745.96 L1171.61 745.99 L1171.34 746.08 L1171.05 746.21 L1170.73 746.35 L1170.40 746.48 L1170.08 746.57 L1169.54 746.95 L1169.09 747.16 L1168.70 747.24 L1168.36 747.25 L1168.05 747.21 L1167.77 747.11 L1167.52 746.97 L1167.30 746.80 L1167.13 746.58 L1166.99 746.33 L1166.89 746.05 L1166.85 745.74 L1166.86 745.40 L1166.94 745.01 L1167.15 744.56 L1167.53 744.02 L1167.62 743.70 L1167.75 743.37 L1167.89 743.05 L1168.02 742.76 L1168.11 742.49 L1168.14 742.27 L1168.10 742.07 L1167.99 741.91 L1167.81 741.78 L1167.56 741.65 L1167.26 741.53 L1166.94 741.41 L1166.61 741.27 L1166.32 741.10 L1165.67 740.99 L1165.20 740.82 L1164.87 740.61 L1164.62 740.37 L1164.44 740.12 L1164.30 739.85 L1164.23 739.58 L1164.20 739.30 L1164.23 739.02 L1164.30 738.75 L1164.44 738.48 L1164.62 738.23 L1164.87 737.99 L1165.20 737.78 L1165.67 737.61 L1166.32 737.50 L1166.61 737.33 L1166.94 737.19 L1167.26 737.07 L1167.56 736.95 L1167.81 736.82 L1167.99 736.69 L1168.10 736.53 L1168.14 736.33 L1168.11 736.11 L1168.02 735.84 L1167.89 735.55 L1167.75 735.23 L1167.62 734.90 L1167.53 734.58 L1167.15 734.04 L1166.94 733.59 L1166.86 733.20 L1166.85 732.86 L1166.89 732.55 L1166.99 732.27 L1167.13 732.02 L1167.30 731.80 L1167.52 731.63 L1167.77 731.49 L1168.05 731.39 L1168.36 731.35 L1168.70 731.36 L1169.09 731.44 L1169.54 731.65 L1170.08 732.03 L1170.40 732.12 L1170.73 732.25 L1171.05 732.39 L1171.34 732.52 L1171.61 732.61 L1171.83 732.64 L1172.03 732.60 L1172.19 732.49 L1172.32 732.31 L1172.45 732.06 L1172.57 731.76 L1172.69 731.44 L1172.83 731.11 L1173.00 730.82 L1173.11 730.17 L1173.28 729.70 L1173.49 729.37 L1173.73 729.12 L1173.98 728.94 L1174.25 728.80 L1174.52 728.73 Z" fill="none" stroke="#fdd648" stroke-width="1.9" stroke-linejoin="round"/><circle cx="1174.8" cy="739.3" r="3.1" fill="none" stroke="#fdd648" stroke-width="1.9"/></svg>
<svg style="left:0;top:0" width="1" height="1"><path d="M279.40 728.80 L279.68 728.83 L279.95 728.90 L280.22 729.04 L280.47 729.22 L280.71 729.47 L280.92 729.80 L281.09 730.27 L281.20 730.92 L281.37 731.21 L281.51 731.54 L281.63 731.86 L281.75 732.16 L281.88 732.41 L282.01 732.59 L282.17 732.70 L282.37 732.74 L282.59 732.71 L282.86 732.62 L283.15 732.49 L283.47 732.35 L283.80 732.22 L284.12 732.13 L284.66 731.75 L285.11 731.54 L285.50 731.46 L285.84 731.45 L286.15 731.49 L286.43 731.59 L286.68 731.73 L286.90 731.90 L287.07 732.12 L287.21 732.37 L287.31 732.65 L287.35 732.96 L287.34 733.30 L287.26 733.69 L287.05 734.14 L286.67 734.68 L286.58 735.00 L286.45 735.33 L286.31 735.65 L286.18 735.94 L286.09 736.21 L286.06 736.43 L286.10 736.63 L286.21 736.79 L286.39 736.92 L286.64 737.05 L286.94 737.17 L287.26 737.29 L287.59 737.43 L287.88 737.60 L288.53 737.71 L289.00 737.88 L289.33 738.09 L289.58 738.33 L289.76 738.58 L289.90 738.85 L289.97 739.12 L290.00 739.40 L289.97 739.68 L289.90 739.95 L289.76 740.22 L289.58 740.47 L289.33 740.71 L289.00 740.92 L288.53 741.09 L287.88 741.20 L287.59 741.37 L287.26 741.51 L286.94 741.63 L286.64 741.75 L286.39 741.88 L286.21 742.01 L286.10 742.17 L286.06 742.37 L286.09 742.59 L286.18 742.86 L286.31 743.15 L286.45 743.47 L286.58 743.80 L286.67 744.12 L287.05 744.66 L287.26 745.11 L287.34 745.50 L287.35 745.84 L287.31 746.15 L287.21 746.43 L287.07 746.68 L286.90 746.90 L286.68 747.07 L286.43 747.21 L286.15 747.31 L285.84 747.35 L285.50 747.34 L285.11 747.26 L284.66 747.05 L284.12 746.67 L283.80 746.58 L283.47 746.45 L283.15 746.31 L282.86 746.18 L282.59 746.09 L282.37 746.06 L282.17 746.10 L282.01 746.21 L281.88 746.39 L281.75 746.64 L281.63 746.94 L281.51 747.26 L281.37 747.59 L281.20 747.88 L281.09 748.53 L280.92 749.00 L280.71 749.33 L280.47 749.58 L280.22 749.76 L279.95 749.90 L279.68 749.97 L279.40 750.00 L279.12 749.97 L278.85 749.90 L278.58 749.76 L278.33 749.58 L278.09 749.33 L277.88 749.00 L277.71 748.53 L277.60 747.88 L277.43 747.59 L277.29 747.26 L277.17 746.94 L277.05 746.64 L276.92 746.39 L276.79 746.21 L276.63 746.10 L276.43 746.06 L276.21 746.09 L275.94 746.18 L275.65 746.31 L275.33 746.45 L275.00 746.58 L274.68 746.67 L274.14 747.05 L273.69 747.26 L273.30 747.34 L272.96 747.35 L272.65 747.31 L272.37 747.21 L272.12 747.07 L271.90 746.90 L271.73 746.68 L271.59 746.43 L271.49 746.15 L271.45 745.84 L271.46 745.50 L271.54 745.11 L271.75 744.66 L272.13 744.12 L272.22 743.80 L272.35 743.47 L272.49 743.15 L272.62 742.86 L272.71 742.59 L272.74 742.37 L272.70 742.17 L272.59 742.01 L272.41 741.88 L272.16 741.75 L271.86 741.63 L271.54 741.51 L271.21 741.37 L270.92 741.20 L270.27 741.09 L269.80 740.92 L269.47 740.71 L269.22 740.47 L269.04 740.22 L268.90 739.95 L268.83 739.68 L268.80 739.40 L268.83 739.12 L268.90 738.85 L269.04 738.58 L269.22 738.33 L269.47 738.09 L269.80 737.88 L270.27 737.71 L270.92 737.60 L271.21 737.43 L271.54 737.29 L271.86 737.17 L272.16 737.05 L272.41 736.92 L272.59 736.79 L272.70 736.63 L272.74 736.43 L272.71 736.21 L272.62 735.94 L272.49 735.65 L272.35 735.33 L272.22 735.00 L272.13 734.68 L271.75 734.14 L271.54 733.69 L271.46 733.30 L271.45 732.96 L271.49 732.65 L271.59 732.37 L271.73 732.12 L271.90 731.90 L272.12 731.73 L272.37 731.59 L272.65 731.49 L272.96 731.45 L273.30 731.46 L273.69 731.54 L274.14 731.75 L274.68 732.13 L275.00 732.22 L275.33 732.35 L275.65 732.49 L275.94 732.62 L276.21 732.71 L276.43 732.74 L276.63 732.70 L276.79 732.59 L276.92 732.41 L277.05 732.16 L277.17 731.86 L277.29 731.54 L277.43 731.21 L277.60 730.92 L277.71 730.27 L277.88 729.80 L278.09 729.47 L278.33 729.22 L278.58 729.04 L278.85 728.90 L279.12 728.83 Z" fill="none" stroke="#fdd648" stroke-width="1.9" stroke-linejoin="round"/><circle cx="279.4" cy="739.4" r="3.1" fill="none" stroke="#fdd648" stroke-width="1.9"/></svg>
<svg style="left:0;top:0" width="1" height="1"><circle cx="279.4" cy="739.4" r="21.15" fill="none" stroke="#fdd648" stroke-width="1.1"/></svg>
<svg class="g" style="left:36px;top:786px" width="102" height="80">
<rect x="35.75" y="1.05" width="46.95" height="49.85" fill="#76b900"/>
<g fill="#76b900">
<path d="M35.75 7.7 C24 9 13 16 7.8 22.2 C13 33 23 42.5 35.75 44.9 L35.75 41 C26 38.5 19.5 31 16 22.7 C20 17.5 27 13.2 35.75 12.1 Z"/>
<path d="M35.75 16.2 C29 17 24 20 20.7 24 C23.5 30 29 35 35.75 36.7 L35.75 33.1 C32 32 29 28.5 27.4 24.7 C29.5 22.3 32 20.6 35.75 20.1 Z"/>
</g>
<g fill="#1a1a1a">
<path d="M35.75 8.9 C48 8.5 58 14 64.6 22 C58 31 47 36.5 35.75 36.7 L35.75 33.8 C45 33.5 52.5 29 57.1 22.4 C52 15.5 45 12 35.75 11.7 Z"/>
<path d="M35.75 16.2 C41.7 16.2 47 18.8 49.9 22 L44.4 26.9 C42.4 23.4 39.8 20.7 35.75 20.1 Z"/>
<path d="M35.75 44.9 C52 44.5 65 39 76 32.5 L68.2 27.9 C60.7 34.4 49.6 39.7 35.75 41 Z"/>
</g>
<text x="0.6" y="78" font-family="Liberation Sans, sans-serif" font-weight="700" font-size="25.4" fill="#b2b2b2" stroke="#b2b2b2" stroke-width="0.8" textLength="99.6" lengthAdjust="spacingAndGlyphs">NVIDIA</text>
</svg>
<svg class="g" style="left:176px;top:803px" width="120.0" height="46.0"><g transform="scale(1)"><path d="M52.6 37.6 L63.5 17.8 L74.5 37.6 Z" fill="#0a4e96"/><text x="11" y="32.6" font-family="Liberation Sans, sans-serif" font-size="12.6" fill="#0b4f95" stroke="#0b4f95" stroke-width="0.3" textLength="42" lengthAdjust="spacing">DELT</text><text x="75" y="32.6" font-family="Liberation Sans, sans-serif" font-size="12.6" fill="#0b4f95" stroke="#0b4f95" stroke-width="0.3" textLength="41.6" lengthAdjust="spacing">CAST</text><path d="M10.6 17.6 C2 24 0.5 33 8 38.6 C17 44.6 36 42.6 52 34.6 C66 27.6 78 15 86.4 2.4 C77 14 65 24 51 30.6 C36 37.6 19 40 11.6 35.6 C5 31.6 5.6 24 10.6 17.6 Z" fill="#2fa64a"/></g></svg>
<svg style="left:315px;top:760px" width="130" height="118">
<defs>
<radialGradient id="wra" cx="0.8" cy="1.0" r="1.05"><stop offset="0" stop-color="#fee8dc"/><stop offset="0.22" stop-color="#f4a68e"/><stop offset="0.5" stop-color="#d83a2a"/><stop offset="0.8" stop-color="#a21010"/><stop offset="1" stop-color="#860808"/></radialGradient>
<radialGradient id="wga" cx="0.08" cy="0.95" r="1.05"><stop offset="0" stop-color="#e4f4b4"/><stop offset="0.3" stop-color="#8cc63f"/><stop offset="0.6" stop-color="#3f8f18"/><stop offset="1" stop-color="#2a6a0c"/></radialGradient>
<radialGradient id="wba" cx="0.85" cy="0.18" r="1.05"><stop offset="0" stop-color="#bfe6f8"/><stop offset="0.35" stop-color="#5aa8e0"/><stop offset="0.7" stop-color="#1f6cc4"/><stop offset="1" stop-color="#0a3c90"/></radialGradient>
<radialGradient id="wya" cx="0.22" cy="0.12" r="1.05"><stop offset="0" stop-color="#fdf0a4"/><stop offset="0.4" stop-color="#f8c838"/><stop offset="0.8" stop-color="#ee9c0e"/><stop offset="1" stop-color="#d88406"/></radialGradient>
<radialGradient id="wsa" cx="0.5" cy="0.5" r="0.5"><stop offset="0" stop-color="#000" stop-opacity="0.55"/><stop offset="1" stop-color="#000" stop-opacity="0"/></radialGradient>
</defs>
<ellipse cx="76" cy="109" rx="36" ry="6" fill="url(#wsa)"/>
<path d="M36.7 18 Q58 6.5 77.7 23.4 L68.3 58.1 Q49 45.5 27.3 55.8 Z" fill="url(#wra)"/>
<path d="M82.3 25.8 Q101 39.5 124.5 28.9 L114.5 65.6 Q94 76 73.4 62.5 Z" fill="url(#wga)"/>
<path d="M25.8 61.7 Q46 50.5 65.6 64 L56.25 100.8 Q37 88.5 15.6 99.5 Z" fill="url(#wba)"/>
<path d="M71.1 68.75 Q90 82 112.2 71.9 L102.7 107.8 Q82 119 60.9 105 Z" fill="url(#wya)"/>
<g fill="none" stroke="#fff" stroke-width="1.3" stroke-linecap="round" opacity="0.6"><path d="M47 16.2 Q58 12.6 68 17.6"/><path d="M92 32.4 Q101 35.4 111 33.6"/><path d="M36 62.6 Q45 58.2 55 61.4"/><path d="M81 75 Q90 78.6 100 76.8"/></g>
</svg>
<svg class="g" style="left:478px;top:770px" width="112" height="112">
<defs><clipPath id="ndc"><rect x="0" y="0" width="112" height="112"/></clipPath></defs>
<rect x="0" y="0" width="112" height="112" fill="#131313"/>
<g clip-path="url(#ndc)" fill="none" stroke="#2470b9">
<circle cx="0" cy="112" r="98.5" stroke-width="19.5"/>
<circle cx="0" cy="112" r="54" stroke-width="20"/>
<circle cx="0" cy="112" r="11" stroke-width="22"/>
</g>
<text x="9.5" y="98.9" font-family="Liberation Sans, sans-serif" font-size="53.8" fill="#111" stroke="#111" stroke-width="8.6" stroke-linejoin="miter" stroke-miterlimit="2" textLength="89" lengthAdjust="spacingAndGlyphs">NDI</text>
<text x="9.5" y="98.9" font-family="Liberation Sans, sans-serif" font-size="53.8" fill="#f4f5f7" stroke="#f4f5f7" stroke-width="2.2" stroke-linejoin="miter" textLength="89" lengthAdjust="spacingAndGlyphs">NDI</text>
</svg>
<svg style="left:613.4px;top:760px" width="130" height="118">
<defs>
<radialGradient id="wrb" cx="0.8" cy="1.0" r="1.05"><stop offset="0" stop-color="#fee8dc"/><stop offset="0.22" stop-color="#f4a68e"/><stop offset="0.5" stop-color="#d83a2a"/><stop offset="0.8" stop-color="#a21010"/><stop offset="1" stop-color="#860808"/></radialGradient>
<radialGradient id="wgb" cx="0.08" cy="0.95" r="1.05"><stop offset="0" stop-color="#e4f4b4"/><stop offset="0.3" stop-color="#8cc63f"/><stop offset="0.6" stop-color="#3f8f18"/><stop offset="1" stop-color="#2a6a0c"/></radialGradient>
<radialGradient id="wbb" cx="0.85" cy="0.18" r="1.05"><stop offset="0" stop-color="#bfe6f8"/><stop offset="0.35" stop-color="#5aa8e0"/><stop offset="0.7" stop-color="#1f6cc4"/><stop offset="1" stop-color="#0a3c90"/></radialGradient>
<radialGradient id="wyb" cx="0.22" cy="0.12" r="1.05"><stop offset="0" stop-color="#fdf0a4"/><stop offset="0.4" stop-color="#f8c838"/><stop offset="0.8" stop-color="#ee9c0e"/><stop offset="1" stop-color="#d88406"/></radialGradient>
<radialGradient id="wsb" cx="0.5" cy="0.5" r="0.5"><stop offset="0" stop-color="#000" stop-opacity="0.55"/><stop offset="1" stop-color="#000" stop-opacity="0"/></radialGradient>
</defs>
<ellipse cx="76" cy="109" rx="36" ry="6" fill="url(#wsb)"/>
<path d="M36.7 18 Q58 6.5 77.7 23.4 L68.3 58.1 Q49 45.5 27.3 55.8 Z" fill="url(#wrb)"/>
<path d="M82.3 25.8 Q101 39.5 124.5 28.9 L114.5 65.6 Q94 76 73.4 62.5 Z" fill="url(#wgb)"/>
<path d="M25.8 61.7 Q46 50.5 65.6 64 L56.25 100.8 Q37 88.5 15.6 99.5 Z" fill="url(#wbb)"/>
<path d="M71.1 68.75 Q90 82 112.2 71.9 L102.7 107.8 Q82 119 60.9 105 Z" fill="url(#wyb)"/>
<g fill="none" stroke="#fff" stroke-width="1.3" stroke-linecap="round" opacity="0.6"><path d="M47 16.2 Q58 12.6 68 17.6"/><path d="M92 32.4 Q101 35.4 111 33.6"/><path d="M36 62.6 Q45 58.2 55 61.4"/><path d="M81 75 Q90 78.6 100 76.8"/></g>
</svg>
<svg style="left:762.6px;top:760px" width="130" height="118">
<defs>
<radialGradient id="wrc" cx="0.8" cy="1.0" r="1.05"><stop offset="0" stop-color="#fee8dc"/><stop offset="0.22" stop-color="#f4a68e"/><stop offset="0.5" stop-color="#d83a2a"/><stop offset="0.8" stop-color="#a21010"/><stop offset="1" stop-color="#860808"/></radialGradient>
<radialGradient id="wgc" cx="0.08" cy="0.95" r="1.05"><stop offset="0" stop-color="#e4f4b4"/><stop offset="0.3" stop-color="#8cc63f"/><stop offset="0.6" stop-color="#3f8f18"/><stop offset="1" stop-color="#2a6a0c"/></radialGradient>
<radialGradient id="wbc" cx="0.85" cy="0.18" r="1.05"><stop offset="0" stop-color="#bfe6f8"/><stop offset="0.35" stop-color="#5aa8e0"/><stop offset="0.7" stop-color="#1f6cc4"/><stop offset="1" stop-color="#0a3c90"/></radialGradient>
<radialGradient id="wyc" cx="0.22" cy="0.12" r="1.05"><stop offset="0" stop-color="#fdf0a4"/><stop offset="0.4" stop-color="#f8c838"/><stop offset="0.8" stop-color="#ee9c0e"/><stop offset="1" stop-color="#d88406"/></radialGradient>
<radialGradient id="wsc" cx="0.5" cy="0.5" r="0.5"><stop offset="0" stop-color="#000" stop-opacity="0.55"/><stop offset="1" stop-color="#000" stop-opacity="0"/></radialGradient>
</defs>
<ellipse cx="76" cy="109" rx="36" ry="6" fill="url(#wsc)"/>
<path d="M36.7 18 Q58 6.5 77.7 23.4 L68.3 58.1 Q49 45.5 27.3 55.8 Z" fill="url(#wrc)"/>
<path d="M82.3 25.8 Q101 39.5 124.5 28.9 L114.5 65.6 Q94 76 73.4 62.5 Z" fill="url(#wgc)"/>
<path d="M25.8 61.7 Q46 50.5 65.6 64 L56.25 100.8 Q37 88.5 15.6 99.5 Z" fill="url(#wbc)"/>
<path d="M71.1 68.75 Q90 82 112.2 71.9 L102.7 107.8 Q82 119 60.9 105 Z" fill="url(#wyc)"/>
<g fill="none" stroke="#fff" stroke-width="1.3" stroke-linecap="round" opacity="0.6"><path d="M47 16.2 Q58 12.6 68 17.6"/><path d="M92 32.4 Q101 35.4 111 33.6"/><path d="M36 62.6 Q45 58.2 55 61.4"/><path d="M81 75 Q90 78.6 100 76.8"/></g>
</svg>
<svg style="left:911.8px;top:760px" width="130" height="118">
<defs>
<radialGradient id="wrd" cx="0.8" cy="1.0" r="1.05"><stop offset="0" stop-color="#fee8dc"/><stop offset="0.22" stop-color="#f4a68e"/><stop offset="0.5" stop-color="#d83a2a"/><stop offset="0.8" stop-color="#a21010"/><stop offset="1" stop-color="#860808"/></radialGradient>
<radialGradient id="wgd" cx="0.08" cy="0.95" r="1.05"><stop offset="0" stop-color="#e4f4b4"/><stop offset="0.3" stop-color="#8cc63f"/><stop offset="0.6" stop-color="#3f8f18"/><stop offset="1" stop-color="#2a6a0c"/></radialGradient>
<radialGradient id="wbd" cx="0.85" cy="0.18" r="1.05"><stop offset="0" stop-color="#bfe6f8"/><stop offset="0.35" stop-color="#5aa8e0"/><stop offset="0.7" stop-color="#1f6cc4"/><stop offset="1" stop-color="#0a3c90"/></radialGradient>
<radialGradient id="wyd" cx="0.22" cy="0.12" r="1.05"><stop offset="0" stop-color="#fdf0a4"/><stop offset="0.4" stop-color="#f8c838"/><stop offset="0.8" stop-color="#ee9c0e"/><stop offset="1" stop-color="#d88406"/></radialGradient>
<radialGradient id="wsd" cx="0.5" cy="0.5" r="0.5"><stop offset="0" stop-color="#000" stop-opacity="0.55"/><stop offset="1" stop-color="#000" stop-opacity="0"/></radialGradient>
</defs>
<ellipse cx="76" cy="109" rx="36" ry="6" fill="url(#wsd)"/>
<path d="M36.7 18 Q58 6.5 77.7 23.4 L68.3 58.1 Q49 45.5 27.3 55.8 Z" fill="url(#wrd)"/>
<path d="M82.3 25.8 Q101 39.5 124.5 28.9 L114.5 65.6 Q94 76 73.4 62.5 Z" fill="url(#wgd)"/>
<path d="M25.8 61.7 Q46 50.5 65.6 64 L56.25 100.8 Q37 88.5 15.6 99.5 Z" fill="url(#wbd)"/>
<path d="M71.1 68.75 Q90 82 112.2 71.9 L102.7 107.8 Q82 119 60.9 105 Z" fill="url(#wyd)"/>
<g fill="none" stroke="#fff" stroke-width="1.3" stroke-linecap="round" opacity="0.6"><path d="M47 16.2 Q58 12.6 68 17.6"/><path d="M92 32.4 Q101 35.4 111 33.6"/><path d="M36 62.6 Q45 58.2 55 61.4"/><path d="M81 75 Q90 78.6 100 76.8"/></g>
</svg>
<svg style="left:1061.0px;top:760px" width="130" height="118">
<defs>
<radialGradient id="wre" cx="0.8" cy="1.0" r="1.05"><stop offset="0" stop-color="#fee8dc"/><stop offset="0.22" stop-color="#f4a68e"/><stop offset="0.5" stop-color="#d83a2a"/><stop offset="0.8" stop-color="#a21010"/><stop offset="1" stop-color="#860808"/></radialGradient>
<radialGradient id="wge" cx="0.08" cy="0.95" r="1.05"><stop offset="0" stop-color="#e4f4b4"/><stop offset="0.3" stop-color="#8cc63f"/><stop offset="0.6" stop-color="#3f8f18"/><stop offset="1" stop-color="#2a6a0c"/></radialGradient>
<radialGradient id="wbe" cx="0.85" cy="0.18" r="1.05"><stop offset="0" stop-color="#bfe6f8"/><stop offset="0.35" stop-color="#5aa8e0"/><stop offset="0.7" stop-color="#1f6cc4"/><stop offset="1" stop-color="#0a3c90"/></radialGradient>
<radialGradient id="wye" cx="0.22" cy="0.12" r="1.05"><stop offset="0" stop-color="#fdf0a4"/><stop offset="0.4" stop-color="#f8c838"/><stop offset="0.8" stop-color="#ee9c0e"/><stop offset="1" stop-color="#d88406"/></radialGradient>
<radialGradient id="wse" cx="0.5" cy="0.5" r="0.5"><stop offset="0" stop-color="#000" stop-opacity="0.55"/><stop offset="1" stop-color="#000" stop-opacity="0"/></radialGradient>
</defs>
<ellipse cx="76" cy="109" rx="36" ry="6" fill="url(#wse)"/>
<path d="M36.7 18 Q58 6.5 77.7 23.4 L68.3 58.1 Q49 45.5 27.3 55.8 Z" fill="url(#wre)"/>
<path d="M82.3 25.8 Q101 39.5 124.5 28.9 L114.5 65.6 Q94 76 73.4 62.5 Z" fill="url(#wge)"/>
<path d="M25.8 61.7 Q46 50.5 65.6 64 L56.25 100.8 Q37 88.5 15.6 99.5 Z" fill="url(#wbe)"/>
<path d="M71.1 68.75 Q90 82 112.2 71.9 L102.7 107.8 Q82 119 60.9 105 Z" fill="url(#wye)"/>
<g fill="none" stroke="#fff" stroke-width="1.3" stroke-linecap="round" opacity="0.6"><path d="M47 16.2 Q58 12.6 68 17.6"/><path d="M92 32.4 Q101 35.4 111 33.6"/><path d="M36 62.6 Q45 58.2 55 61.4"/><path d="M81 75 Q90 78.6 100 76.8"/></g>
</svg>
<svg class="g" style="left:1240px;top:786px" width="80" height="80"><g transform="translate(0.60 0.70)">
<rect x="6.5" y="6" width="66" height="66.6" fill="#333333"/>
<path d="M0 0 H16.7 V6.1 H6.5 V72.4 H16.7 V78.5 H0 Z M79 0 H62.3 V6.1 H72.5 V72.4 H62.3 V78.5 H79 Z" fill="#e8611a"/>
<text x="15.4" y="45.8" font-family="Liberation Sans, sans-serif" font-weight="700" font-size="19.4" fill="#fff" stroke="#fff" stroke-width="0.7" textLength="51" lengthAdjust="spacingAndGlyphs">NULL</text></g></svg>
<svg class="g" style="left:1390px;top:786px" width="80" height="80"><g transform="translate(0.00 0.70)">
<rect x="6.5" y="6" width="66" height="66.6" fill="#333333"/>
<path d="M0 0 H16.7 V6.1 H6.5 V72.4 H16.7 V78.5 H0 Z M79 0 H62.3 V6.1 H72.5 V72.4 H62.3 V78.5 H79 Z" fill="#e8611a"/>
<path d="M47.2 27.5 L52.3 11.9 L60.9 18.2 L49.8 29.6 Z" fill="#fff"/><circle cx="39.5" cy="39.9" r="17" fill="#fff"/><circle cx="39.5" cy="39.9" r="4" fill="#333"/></g></svg>
<svg class="g" style="left:1538px;top:786px" width="80" height="80"><g transform="translate(0.90 0.70)">
<rect x="6.5" y="6" width="66" height="66.6" fill="#333333"/>
<path d="M0 0 H16.7 V6.1 H6.5 V72.4 H16.7 V78.5 H0 Z M79 0 H62.3 V6.1 H72.5 V72.4 H62.3 V78.5 H79 Z" fill="#e8611a"/>
<path d="M16.9 15 H35.6 L42.8 32 L50.6 15 H61.9 L38.5 66 Z" fill="#fff"/><rect x="42.5" y="44.1" width="23.8" height="19.1" fill="#e8611a"/><rect x="46.9" y="53.3" width="15.3" height="8.4" fill="#fff"/><path d="M46.9 52.6 L60.9 46.3" stroke="#fff" stroke-width="2"/></g></svg>
<svg class="g" style="left:1688px;top:786px" width="80" height="80"><g transform="translate(0.60 0.70)">
<rect x="6.5" y="6" width="66" height="66.6" fill="#333333"/>
<path d="M0 0 H16.7 V6.1 H6.5 V72.4 H16.7 V78.5 H0 Z M79 0 H62.3 V6.1 H72.5 V72.4 H62.3 V78.5 H79 Z" fill="#e8611a"/>
<path d="M14.76 27.68 A33 33 0 0 1 62.24 27.68" fill="none" stroke="#f2f2f2" stroke-width="2.9" stroke-linecap="round"/><path d="M19.80 32.54 A26 26 0 0 1 57.20 32.54" fill="none" stroke="#f2f2f2" stroke-width="2.9" stroke-linecap="round"/><path d="M24.83 37.40 A19 19 0 0 1 52.17 37.40" fill="none" stroke="#f2f2f2" stroke-width="2.9" stroke-linecap="round"/><path d="M29.87 42.26 A12 12 0 0 1 47.13 42.26" fill="none" stroke="#f2f2f2" stroke-width="2.9" stroke-linecap="round"/><circle cx="38.5" cy="50.6" r="4" fill="#f2f2f2"/></g></svg>
<svg class="g" style="left:1837px;top:786px" width="80" height="80"><g transform="translate(0.60 0.70)">
<rect x="6.5" y="6" width="66" height="66.6" fill="#333333"/>
<path d="M0 0 H16.7 V6.1 H6.5 V72.4 H16.7 V78.5 H0 Z M79 0 H62.3 V6.1 H72.5 V72.4 H62.3 V78.5 H79 Z" fill="#e8611a"/>
<path d="M18 30 H30 L36 48 L42 30 H50 L36 62 Z" fill="#fff"/></g></svg>
<span class="t" style="left:29px;top:887px;font-size:19.2px;color:#dedede;transform:scaleX(1.0003);-webkit-text-stroke:0.25px #dedede;">NVIDIA</span>
<span class="t" style="left:29px;top:913px;font-size:19.2px;color:#dedede;transform:scaleX(1.0421);-webkit-text-stroke:0.25px #dedede;">Quadro</span>
<span class="t" style="left:29px;top:939px;font-size:19.2px;color:#dedede;transform:scaleX(0.9807);-webkit-text-stroke:0.25px #dedede;">P6000</span>
<span class="t" style="left:178px;top:887px;font-size:19.2px;color:#dedede;transform:scaleX(1.0010);-webkit-text-stroke:0.25px #dedede;">Deltacast</span>
<span class="t" style="left:179px;top:913px;font-size:19.2px;color:#dedede;transform:scaleX(1.0315);-webkit-text-stroke:0.25px #dedede;">3G-elp-</span>
<span class="t" style="left:179px;top:939px;font-size:19.2px;color:#dedede;transform:scaleX(1.0130);-webkit-text-stroke:0.25px #dedede;">2key-d 44</span>
<span class="t" style="left:328px;top:887px;font-size:19.2px;color:#dedede;transform:scaleX(0.9911);-webkit-text-stroke:0.25px #dedede;">Logi C270</span>
<span class="t" style="left:328px;top:913px;font-size:19.2px;color:#dedede;transform:scaleX(0.9930);-webkit-text-stroke:0.25px #dedede;">HD WebCam</span>
<span class="t" style="left:516px;top:887px;font-size:19.2px;color:#dedede;transform:scaleX(1.0737);-webkit-text-stroke:0.25px #dedede;">NDI</span>
<span class="t" style="left:626px;top:887px;font-size:19.2px;color:#dedede;transform:scaleX(1.0673);-webkit-text-stroke:0.25px #dedede;">NDI</span>
<span class="t" style="left:628px;top:913px;font-size:19.2px;color:#dedede;transform:scaleX(0.9865);-webkit-text-stroke:0.25px #dedede;">Webcam</span>
<span class="t" style="left:628px;top:939px;font-size:19.2px;color:#dedede;transform:scaleX(0.9866);-webkit-text-stroke:0.25px #dedede;">Video 1</span>
<span class="t" style="left:775px;top:887px;font-size:19.2px;color:#dedede;transform:scaleX(1.0737);-webkit-text-stroke:0.25px #dedede;">NDI</span>
<span class="t" style="left:777px;top:913px;font-size:19.2px;color:#dedede;transform:scaleX(0.9891);-webkit-text-stroke:0.25px #dedede;">Webcam</span>
<span class="t" style="left:777px;top:939px;font-size:19.2px;color:#dedede;transform:scaleX(0.9916);-webkit-text-stroke:0.25px #dedede;">Video 2</span>
<span class="t" style="left:924px;top:887px;font-size:19.2px;color:#dedede;transform:scaleX(1.0801);-webkit-text-stroke:0.25px #dedede;">NDI</span>
<span class="t" style="left:926px;top:913px;font-size:19.2px;color:#dedede;transform:scaleX(0.9918);-webkit-text-stroke:0.25px #dedede;">Webcam</span>
<span class="t" style="left:926px;top:939px;font-size:19.2px;color:#dedede;transform:scaleX(0.9928);-webkit-text-stroke:0.25px #dedede;">Video 3</span>
<span class="t" style="left:1073px;top:887px;font-size:19.2px;color:#dedede;transform:scaleX(1.0865);-webkit-text-stroke:0.25px #dedede;">NDI</span>
<span class="t" style="left:1075px;top:913px;font-size:19.2px;color:#dedede;transform:scaleX(0.9945);-webkit-text-stroke:0.25px #dedede;">Webcam</span>
<span class="t" style="left:1075px;top:939px;font-size:19.2px;color:#dedede;transform:scaleX(0.9902);-webkit-text-stroke:0.25px #dedede;">Video 4</span>
<span class="t" style="left:1262px;top:887px;font-size:19.2px;color:#dedede;transform:scaleX(1.0978);-webkit-text-stroke:0.25px #dedede;">Null</span>
<span class="t" style="left:1372px;top:887px;font-size:19.2px;color:#dedede;transform:scaleX(1.0161);-webkit-text-stroke:0.25px #dedede;">Render to</span>
<span class="t" style="left:1372px;top:913px;font-size:19.2px;color:#dedede;transform:scaleX(1.0026);-webkit-text-stroke:0.25px #dedede;">Disk</span>
<span class="t" style="left:1532px;top:887px;font-size:19.2px;color:#dedede;transform:scaleX(1.0125);-webkit-text-stroke:0.25px #dedede;">Off-Screen</span>
<span class="t" style="left:1671px;top:887px;font-size:19.2px;color:#dedede;transform:scaleX(0.9966);-webkit-text-stroke:0.25px #dedede;">Encoded</span>
<span class="t" style="left:1671px;top:913px;font-size:19.2px;color:#dedede;transform:scaleX(0.9978);-webkit-text-stroke:0.25px #dedede;">Stream Out</span>
</div></div>
<svg style="left:0;top:0" width="1" height="1"><rect x="243.6" y="701.6" width="69.8" height="75.2" rx="1" fill="none" stroke="#f55f14" stroke-width="5.2" stroke-linejoin="round"/></svg>
<div class="b" style="left:21px;top:1033px;width:1838px;height:230px;background:#1a1a1a;border:4px solid #333333;"></div>
<div class="b" style="left:936px;top:1033px;width:8px;height:230px;background:#333333;"></div>
<div class="b" style="left:34px;top:1046px;width:893px;height:64px;background:#333333;"></div>
<span class="t" style="left:367px;top:1067px;font-size:29px;color:#e6e6e6;transform:scaleX(1.0123);font-weight:700;">Video Inputs</span>
<svg style="left:0;top:0" width="1" height="1"><path d="M885.0 1067.2 H908.5999999999999 M896.8 1055.4 V1079" stroke="#fdd648" stroke-width="3.2" stroke-linecap="round" fill="none"/></svg>
<span class="t" style="left:877px;top:1094px;font-size:15.8px;color:#dedede;transform:scaleX(1.0994);-webkit-text-stroke:0.25px #dedede;">Input</span>
<div class="b" style="left:37px;top:1142px;width:887px;height:75px;background:#333333;border-radius:6px;"></div>
<svg style="left:48px;top:1170px" width="16" height="20"><path d="M3.4 3 L10.6 10.1 L3.4 17.2" fill="none" stroke="#b0b0b0" stroke-width="1.7"/></svg>
<svg class="g" style="left:87.4px;top:1167.6px" width="63.4" height="24.3"><g transform="scale(0.528)"><path d="M52.6 37.6 L63.5 17.8 L74.5 37.6 Z" fill="#0a4e96"/><text x="11" y="32.6" font-family="Liberation Sans, sans-serif" font-size="12.6" fill="#0b4f95" stroke="#0b4f95" stroke-width="0" opacity="0.8" textLength="42" lengthAdjust="spacing">DELT</text><text x="75" y="32.6" font-family="Liberation Sans, sans-serif" font-size="12.6" fill="#0b4f95" stroke="#0b4f95" stroke-width="0" opacity="0.8" textLength="41.6" lengthAdjust="spacing">CAST</text><path d="M10.6 17.6 C2 24 0.5 33 8 38.6 C17 44.6 36 42.6 52 34.6 C66 27.6 78 15 86.4 2.4 C77 14 65 24 51 30.6 C36 37.6 19 40 11.6 35.6 C5 31.6 5.6 24 10.6 17.6 Z" fill="#2fa64a"/></g></svg>
<span class="t" style="left:156px;top:1171px;font-size:19.2px;color:#dedede;transform:scaleX(1.0060);-webkit-text-stroke:0.25px #dedede;">Deltacast: 3G-elp-2key-d 44 In rx0 Out tx0 (isk)</span>
<svg style="left:573px;top:1170px" width="22" height="21"><path d="M2.4 18.6 L3.6 13.4 L14.6 2.4 Q16.4 0.8 18.2 2.6 Q20 4.4 18.4 6.2 L7.4 17.2 Z" fill="none" stroke="#fdd648" stroke-width="2" stroke-linejoin="round"/></svg>
<div class="b" style="left:606px;top:1161px;width:28px;height:38px;background:#3a3a3a;border-radius:13px;"></div>
<span class="t" style="left:614px;top:1171px;font-size:19.2px;color:#dedede;transform:scaleX(1.1229);-webkit-text-stroke:0.25px #dedede;">0</span>
<svg style="left:850px;top:1160px" width="22" height="40"><path d="M2.4 10.2 L10.6 2.2 L18.8 10.2 M2.4 29.2 L10.6 37.2 L18.8 29.2" fill="none" stroke="#8c7a36" stroke-width="2"/></svg>
<svg style="left:893px;top:1170px" width="20" height="21"><path d="M1 5.2 H19 M6.4 5 V2.8 Q6.4 1.4 7.8 1.4 H12.2 Q13.6 1.4 13.6 2.8 V5 M3.2 5.4 V16.6 Q3.2 18.8 5.4 18.8 H14.6 Q16.8 18.8 16.8 16.6 V5.4 M8 9 V15 M12 9 V15" fill="none" stroke="#ee8eb4" stroke-width="1.9" stroke-linecap="round"/></svg>
<div class="b" style="left:953px;top:1046px;width:893px;height:64px;background:#333333;"></div>
<span class="t" style="left:1270px;top:1067px;font-size:29px;color:#e6e6e6;transform:scaleX(1.0127);font-weight:700;">Video Outputs</span>
<svg style="left:0;top:0" width="1" height="1"><path d="M1800.0 1067.2 H1823.6 M1811.8 1055.4 V1079" stroke="#fdd648" stroke-width="3.2" stroke-linecap="round" fill="none"/></svg>
<span class="t" style="left:1786px;top:1094px;font-size:15.8px;color:#dedede;transform:scaleX(1.0759);-webkit-text-stroke:0.25px #dedede;">Output</span>
<div class="b" style="left:956px;top:1142px;width:887px;height:75px;background:#333333;border-radius:6px;"></div>
<svg style="left:967px;top:1170px" width="16" height="20"><path d="M3.4 3 L10.6 10.1 L3.4 17.2" fill="none" stroke="#b0b0b0" stroke-width="1.7"/></svg>
<svg class="g" style="left:1006.4px;top:1167.6px" width="63.4" height="24.3"><g transform="scale(0.528)"><path d="M52.6 37.6 L63.5 17.8 L74.5 37.6 Z" fill="#0a4e96"/><text x="11" y="32.6" font-family="Liberation Sans, sans-serif" font-size="12.6" fill="#0b4f95" stroke="#0b4f95" stroke-width="0" opacity="0.8" textLength="42" lengthAdjust="spacing">DELT</text><text x="75" y="32.6" font-family="Liberation Sans, sans-serif" font-size="12.6" fill="#0b4f95" stroke="#0b4f95" stroke-width="0" opacity="0.8" textLength="41.6" lengthAdjust="spacing">CAST</text><path d="M10.6 17.6 C2 24 0.5 33 8 38.6 C17 44.6 36 42.6 52 34.6 C66 27.6 78 15 86.4 2.4 C77 14 65 24 51 30.6 C36 37.6 19 40 11.6 35.6 C5 31.6 5.6 24 10.6 17.6 Z" fill="#2fa64a"/></g></svg>
<span class="t" style="left:1075px;top:1171px;font-size:19.2px;color:#dedede;transform:scaleX(1.0060);-webkit-text-stroke:0.25px #dedede;">Deltacast: 3G-elp-2key-d 44 In rx0 Out tx0 (isk)</span>
<svg style="left:1492px;top:1170px" width="22" height="21"><path d="M2.4 18.6 L3.6 13.4 L14.6 2.4 Q16.4 0.8 18.2 2.6 Q20 4.4 18.4 6.2 L7.4 17.2 Z" fill="none" stroke="#fdd648" stroke-width="2" stroke-linejoin="round"/></svg>
<div class="b" style="left:1525px;top:1161px;width:28px;height:38px;background:#3a3a3a;border-radius:13px;"></div>
<span class="t" style="left:1533px;top:1171px;font-size:19.2px;color:#dedede;transform:scaleX(1.1229);-webkit-text-stroke:0.25px #dedede;">0</span>
<svg style="left:1769px;top:1160px" width="22" height="40"><path d="M2.4 10.2 L10.6 2.2 L18.8 10.2 M2.4 29.2 L10.6 37.2 L18.8 29.2" fill="none" stroke="#8c7a36" stroke-width="2"/></svg>
<svg style="left:1812px;top:1170px" width="20" height="21"><path d="M1 5.2 H19 M6.4 5 V2.8 Q6.4 1.4 7.8 1.4 H12.2 Q13.6 1.4 13.6 2.8 V5 M3.2 5.4 V16.6 Q3.2 18.8 5.4 18.8 H14.6 Q16.8 18.8 16.8 16.6 V5.4 M8 9 V15 M12 9 V15" fill="none" stroke="#ee8eb4" stroke-width="1.9" stroke-linecap="round"/></svg>
<div class="b" style="left:21px;top:1299px;width:1856px;height:63px;background:#1e1e1e;border:1px solid #363636;border-top-color:#232323;border-radius:0 0 5px 5px;"></div>
<span class="t" style="left:40px;top:1322px;font-size:19.8px;color:#8c8c8c;transform:scaleX(0.8983);-webkit-text-stroke:0.25px #8c8c8c;font-style:italic;">No Issues</span>
</body></html>
